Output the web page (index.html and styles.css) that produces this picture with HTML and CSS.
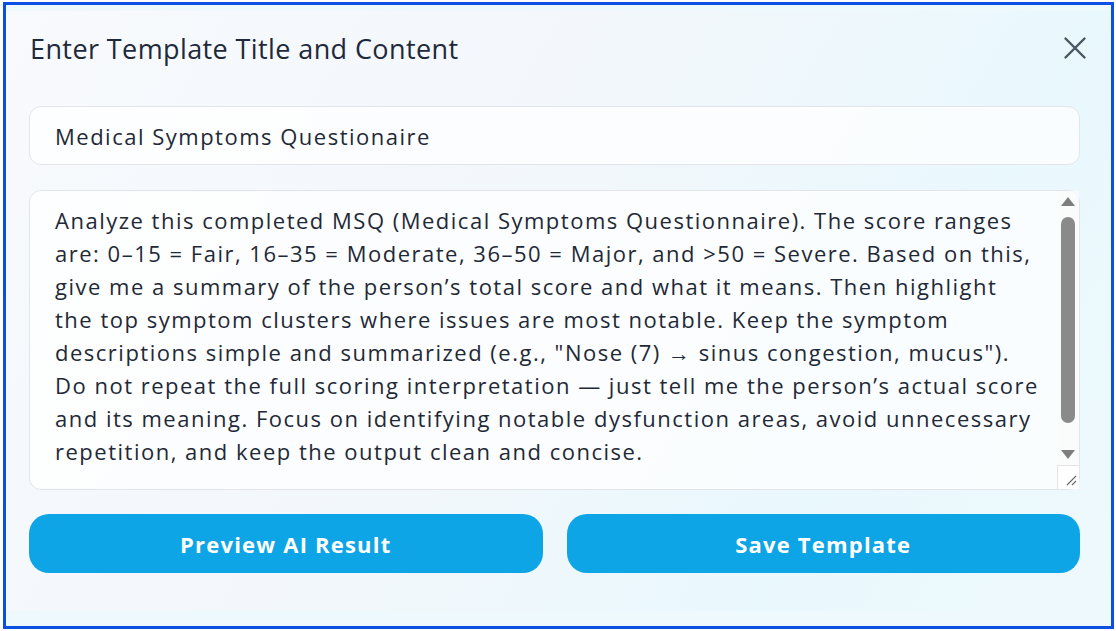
FILE: index.html
```html
<!DOCTYPE html>
<html lang="en">
<head>
    <meta charset="UTF-8">
    <meta name="viewport" content="width=device-width, initial-scale=1.0">
    <title>Enter Template Title and Content</title>
    <link rel="stylesheet" href="styles.css">
</head>
<body>
    <div class="frame">
        <div class="modal">
            <div class="modalHeader">
                <h2 class="modalTitle">Enter Template Title and Content</h2>
                <button class="closeButton" aria-label="Close">
                    <svg width="22" height="22" viewBox="0 0 22 22">
                        <path d="M1.5 1.5 L20.5 20.5 M20.5 1.5 L1.5 20.5" stroke="#4b5563" stroke-width="2.4" stroke-linecap="round" fill="none"/>
                    </svg>
                </button>
            </div>
            <input type="text" class="titleInput" value="Medical Symptoms Questionaire">
            <div class="contentBox">
                <textarea class="contentInput">Analyze this completed MSQ (Medical Symptoms Questionnaire). The score ranges
are: 0–15 = Fair, 16–35 = Moderate, 36–50 = Major, and &gt;50 = Severe. Based on this,
give me a summary of the person’s total score and what it means. Then highlight
the top symptom clusters where issues are most notable. Keep the symptom
descriptions simple and summarized (e.g., "Nose (7) → sinus congestion, mucus").
Do not repeat the full scoring interpretation — just tell me the person’s actual score
and its meaning. Focus on identifying notable dysfunction areas, avoid unnecessary
repetition, and keep the output clean and concise.
</textarea>
                <!-- fake scrollbar, headless hides the native one -->
                <div class="scrollbar">
                    <div class="scrollArrow"><span class="arrowUp"></span></div>
                    <div class="scrollTrack"><div class="scrollThumb"></div></div>
                    <div class="scrollArrow"><span class="arrowDown"></span></div>
                    <div class="scrollCorner">
                        <svg width="12" height="12" viewBox="0 0 12 12">
                            <path d="M2 11 L11 2 M7 11 L11 7" stroke="#6b6b6b" stroke-width="1.2" fill="none"/>
                        </svg>
                    </div>
                </div>
            </div>
            <div class="buttonRow">
                <button class="actionButton">Preview AI Result</button>
                <button class="actionButton">Save Template</button>
            </div>
        </div>
    </div>
</body>
</html>
```

FILE: styles.css
```css
body {
    margin: 0;
    padding: 0;
    background-color: #fff;
    font-family: "Open Sans", Arial, sans-serif;
    color: #1f2937;
}

.frame {
    box-sizing: border-box;
    height: 627px;
    margin: 2px 2px 0 3px;
    padding-top: 6px;
    border: 3px solid #0b4fe3;
    background-color: #eef9fd;
}

.modal {
    box-sizing: border-box;
    height: 600px;
    padding: 9px 31px 0 23px;
    background: linear-gradient(120deg, #f8fafd 0%, #f2f7fb 45%, #e9f8fd 75%, #eef9fd 100%);
}

.modalHeader {
    display: flex;
    align-items: center;
    justify-content: space-between;
    height: 56px;
    margin-bottom: 30px;
}

.modalTitle {
    margin: 0 0 0 1px;
    font-size: 27px;
    font-weight: 400;
    letter-spacing: 0.4px;
    color: #1e293b;
}

.closeButton {
    display: flex;
    padding: 0;
    margin-right: -6px;
    border: none;
    background: none;
    cursor: pointer;
}

.titleInput, .contentInput {
    display: block;
    width: 100%;
    box-sizing: border-box;
    border: 1px solid #e2e6ec;
    border-radius: 12px;
    background-color: rgba(255, 255, 255, 0.75);
    font-family: "Open Sans", Arial, sans-serif;
    font-size: 22px;
    letter-spacing: 1.5px;
    color: #1f2937;
    outline: none;
}

.titleInput {
    height: 59px;
    padding: 0 25px;
    margin-bottom: 25px;
}

.contentBox {
    position: relative;
}

.contentInput {
    height: 300px;
    padding: 13px 26px 0 25px;
    line-height: 33px;
    resize: none;
    overflow: hidden;
    white-space: pre-wrap;
}

.scrollbar {
    position: absolute;
    top: 1px;
    right: 1px;
    bottom: 1px;
    width: 22px;
    display: flex;
    flex-direction: column;
    align-items: center;
    background-color: rgba(250, 250, 250, 0.8);
}

.scrollArrow {
    display: flex;
    align-items: center;
    justify-content: center;
    height: 21px;
}

.arrowUp {
    width: 0;
    height: 0;
    border-left: 7.5px solid transparent;
    border-right: 7.5px solid transparent;
    border-bottom: 9px solid #7d7d7d;
}

.arrowDown {
    width: 0;
    height: 0;
    border-left: 7.5px solid transparent;
    border-right: 7.5px solid transparent;
    border-top: 9px solid #7d7d7d;
}

.scrollTrack {
    flex: 1;
    padding-top: 5px;
}

.scrollThumb {
    width: 14px;
    height: 206px;
    border-radius: 7px;
    background-color: #8a8a8a;
}

.scrollCorner {
    box-sizing: border-box;
    display: flex;
    align-items: flex-end;
    justify-content: flex-end;
    width: 100%;
    height: 24px;
    padding: 0 2px 3px 0;
    border-top: 1px solid #e3e3e3;
    border-left: 1px solid #e3e3e3;
    background-color: #fff;
}

.buttonRow {
    display: flex;
    gap: 24px;
    margin-top: 24px;
}

.actionButton {
    flex: 1;
    height: 59px;
    border: none;
    border-radius: 20px;
    background-color: #0ea5e6;
    color: #fff;
    font-family: "Open Sans", Arial, sans-serif;
    font-size: 22px;
    font-weight: 700;
    letter-spacing: 1.2px;
    cursor: pointer;
}
```
